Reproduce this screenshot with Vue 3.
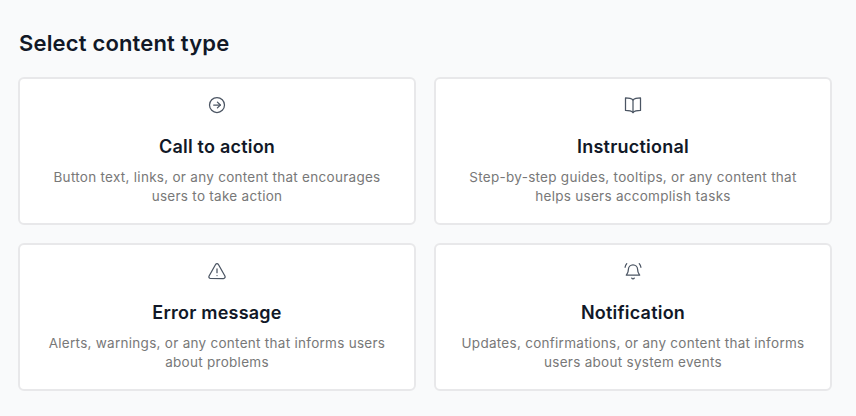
<template>
  <div class="page">
    <h1 class="page-title">Select content type</h1>
    <div class="type-grid">
      <div v-for="item in types" :key="item.title" class="type-card">
        <svg class="type-icon" viewBox="0 0 24 24" fill="none" stroke="currentColor" stroke-width="1.5" stroke-linecap="round" stroke-linejoin="round">
          <path v-for="d in item.paths" :key="d" :d="d" />
        </svg>
        <div class="type-title">{{ item.title }}</div>
        <p class="type-desc">{{ item.line1 }}<br />{{ item.line2 }}</p>
      </div>
    </div>
  </div>
</template>

<script setup>
const types = [
  {
    title: 'Call to action',
    line1: 'Button text, links, or any content that encourages',
    line2: 'users to take action',
    paths: [
      'M12 3a9 9 0 1 0 0 18a9 9 0 1 0 0-18z',
      'M8 12h8',
      'M12.5 8.5L16 12l-3.5 3.5'
    ]
  },
  {
    title: 'Instructional',
    line1: 'Step-by-step guides, tooltips, or any content that',
    line2: 'helps users accomplish tasks',
    paths: [
      'M12 6C10.5 4.500 8 3.500 3 3.500v15c5 0 7.500 1 9 2.500c1.500-1.500 4-2.500 9-2.500v-15C16 3.500 13.500 4.500 12 6z',
      'M12 6V21'
    ]
  },
  {
    title: 'Error message',
    line1: 'Alerts, warnings, or any content that informs users',
    line2: 'about problems',
    paths: [
      'M10.300 4.200L2.500 18a2 2 0 0 0 1.700 3h15.600a2 2 0 0 0 1.700-3L13.700 4.200a2 2 0 0 0-3.400 0z',
      'M12 9.500v4.500',
      'M12 17.500v.01'
    ]
  },
  {
    title: 'Notification',
    line1: 'Updates, confirmations, or any content that informs',
    line2: 'users about system events',
    paths: [
      'M6.500 10a5.500 5.500 0 0 1 11 0c0 4 1.500 5.500 2.500 7H4c1-1.500 2.500-3 2.500-7z',
      'M10.500 20.500a1.800 1.800 0 0 0 3 0',
      'M2.500 7.500C2.800 5.800 3.500 4.300 4.500 3.200',
      'M21.500 7.500C21.200 5.800 20.500 4.300 19.500 3.200'
    ]
  }
]
</script>

<style scoped>
.page {
  box-sizing: border-box;
  width: 856px;
  height: 416px;
  padding: 29px 24px 26px 18px;
  background: #f9fafb;
  font-family: Inter, "Liberation Sans", sans-serif;
}

.page-title {
  margin: 0 0 19px 1px;
  font-size: 22px;
  line-height: 29px;
  font-weight: 600;
  letter-spacing: 0.17px;
  color: #111827;
}

.type-grid {
  display: grid;
  grid-template-columns: 1fr 1fr;
  gap: 18px;
}

.type-card {
  box-sizing: border-box;
  height: 148px;
  padding: 16px 16px 0;
  display: flex;
  flex-direction: column;
  align-items: center;
  background: #fff;
  border: 2px solid #e8e8ea;
  border-radius: 6px;
}

.type-icon {
  width: 20px;
  height: 20px;
  color: #4b5563;
}

.type-title {
  margin-top: 20px;
  font-size: 18px;
  line-height: 24px;
  font-weight: 600;
  letter-spacing: 0.22px;
  color: #111827;
}

.type-desc {
  margin: 9px 0 0;
  font-size: 13.5px;
  line-height: 18.5px;
  letter-spacing: 0.28px;
  text-align: center;
  color: #787878;
}
</style>

<style>
html, body {
  margin: 0;
  background: #f9fafb;
}
</style>
